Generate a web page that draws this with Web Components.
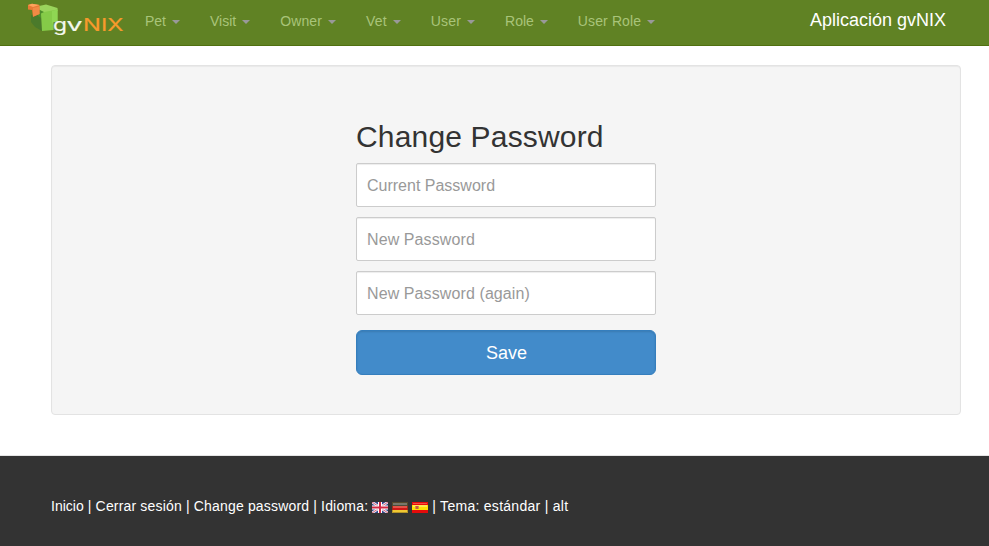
<!DOCTYPE html>
<html lang="es">
<head>
<meta charset="utf-8">
<title>Change Password</title>
<style>
html, body { margin: 0; height: 100%; }
body { font: 14px/20px "Liberation Sans", Arial, sans-serif; color: #333; background: #fff; overflow: hidden; }
</style>
</head>
<body>
<gv-page></gv-page>
<script>
const define = (name, html, setup) => customElements.define(name, class extends HTMLElement {
  constructor() {
    super();
    this.attachShadow({ mode: 'open' }).innerHTML = html;
  }
  connectedCallback() { if (setup) setup(this, this.shadowRoot); }
});

define('gv-logo', `
<style>:host{display:block;width:100px;height:36px} svg{display:block}</style>
<svg width="100" height="36" viewBox="26 0 100 36">
  <path d="M31 15L40 14L42 16V31L35 27L31 22Z" fill="#4b7a2b"/>
  <path d="M39 6L46 4.5L57.5 8L57.5 11L44 13.5L39 11Z" fill="#9ad45c"/>
  <path d="M38 9L44 12V17L41 18L38 16Z" fill="#4d8f2c"/>
  <path d="M41 13.5L44 12L57.5 9.5V22H53.5V30L42 31Z" fill="#85cb48"/>
  <path d="M52 11L57.5 9.5V22H53.5L52 24Z" fill="#8fd653"/>
  <path d="M28 5L32 3.8L39.5 5V14L33 17L32 10L28 9.5Z" fill="#e87b35"/>
  <path d="M28 5L32 3.8L39.5 5L33 7Z" fill="#ffa35c"/>
  <path d="M33 8L39.5 6.5V14L33 16.5Z" fill="#f28a45"/>
  <g font-family="Inter, sans-serif" stroke-width=".15">
    <text x="53" y="30.7" font-size="17" textLength="14" lengthAdjust="spacingAndGlyphs" fill="#f4f7ee" stroke="#f4f7ee">g</text>
    <text x="66.5" y="30.7" font-size="17" textLength="16" lengthAdjust="spacingAndGlyphs" fill="#f4f7ee" stroke="#f4f7ee">v</text>
    <text x="83" y="31" font-size="17.6" textLength="40.5" lengthAdjust="spacingAndGlyphs" fill="#f79a2c" stroke="#f79a2c">NIX</text>
  </g>
</svg>`);

define('gv-menu', `
<style>
:host{display:flex;align-items:center;padding:11px 15px 13px;color:#a9c47a;line-height:20px;white-space:nowrap}
i{margin-left:6px;margin-top:2px;border:4px solid transparent;border-top-color:#999;border-bottom:0}
</style><slot></slot><i></i>`);

define('gv-navbar', `
<style>
:host{display:flex;box-sizing:border-box;height:46px;padding:0 43px 0 26px;background:#608224;border-bottom:1px solid #507010;align-items:flex-start}
gv-logo{margin-right:4px}
nav{display:flex;flex:1}
.w{letter-spacing:.12px}
.x{letter-spacing:.2px}
.brand{font-size:18px;line-height:20px;padding-top:10px;color:#fff}
</style>
<gv-logo></gv-logo>
<nav><gv-menu>Pet</gv-menu><gv-menu>Visit</gv-menu><gv-menu class="w">Owner</gv-menu><gv-menu class="w">Vet</gv-menu><gv-menu class="x">User</gv-menu><gv-menu>Role</gv-menu><gv-menu class="w">User Role</gv-menu></nav>
<div class="brand"><slot></slot></div>`);

define('gv-field', `
<style>
:host{display:block}
input{display:block;box-sizing:border-box;width:100%;height:44px;margin:0;padding:11px 10px 9px;border:1px solid #ccc;border-radius:2px;background:#fff;font:16px/22px "Liberation Sans",Arial,sans-serif;letter-spacing:inherit;box-shadow:inset 0 1px 1px rgba(0,0,0,.075)}
input::placeholder{color:#999;opacity:1}
</style><input type="text">`,
(host, root) => { root.querySelector('input').placeholder = host.getAttribute('label'); });

define('gv-button', `
<style>
:host{display:block}
button{display:block;box-sizing:border-box;width:100%;height:45px;margin:0;padding:0 0 0 1px;border:1px solid #357ebd;border-radius:6px;background:#428bca;color:#fff;font:18px/24px "Liberation Sans",Arial,sans-serif;box-shadow:inset 0 1px 2px rgba(0,0,0,.12)}
</style><button type="button"><slot></slot></button>`);

define('gv-password-form', `
<style>
:host{display:flex;flex-direction:column;gap:10px;width:300px}
h2{font-size:30px;line-height:33px;font-weight:500;letter-spacing:.17px;margin:0;color:#333}
.new{letter-spacing:.1px}
gv-button{margin-top:5px}
</style>
<h2>Change Password</h2>
<gv-field label="Current Password"></gv-field>
<gv-field class="new" label="New Password"></gv-field>
<gv-field class="new" label="New Password (again)"></gv-field>
<gv-button>Save</gv-button>`);

define('gv-panel', `
<style>
:host{display:flex;justify-content:center;box-sizing:border-box;height:350px;margin:19px 28px 0 51px;padding-top:54px;border:1px solid #e3e3e3;border-radius:4px;background:#f5f5f5;box-shadow:inset 0 1px 1px rgba(0,0,0,.05)}
</style><slot></slot>`);

const flags = {
  en: `<rect width="16" height="11" fill="#36498c"/><path d="M0 0L16 11M16 0L0 11" stroke="#eceaf4" stroke-width="2.6"/><path d="M0 0L16 11M16 0L0 11" stroke="#d55269" stroke-width=".9"/><path d="M8 0V11M0 5.5H16" stroke="#fff" stroke-width="4"/><path d="M8 0V11M0 5.5H16" stroke="#d32743" stroke-width="2"/>`,
  de: `<rect width="16" height="4" fill="#4b4b38"/><rect y="1" x="1" width="14" height="2" fill="#77776a"/><rect y="4" width="16" height="4" fill="#cf1716"/><rect x="1" y="4" width="14" height="2" fill="#e35347"/><rect y="8" width="16" height="3" fill="#f0c832"/><path d="M.5 .5H15.5V10.5H.5Z" fill="none" stroke="#5e4818" stroke-opacity=".4"/>`,
  es: `<rect width="16" height="11" fill="#e50b0b"/><rect x="1" y="1" width="14" height="1" fill="#f34d40"/><rect y="3" width="16" height="5" fill="#ffe000"/><rect x="1" y="3" width="14" height="2" fill="#ffe951"/><path d="M3 4h1v3h-1zM6 4h1v3h-1z" fill="#c8964b"/><path d="M4 4h2v3h-2z" fill="#cf563c"/>`
};
define('gv-flag', `
<style>:host{display:block;width:16px;height:11px;white-space:normal}svg{display:block}</style><svg width="16" height="11" viewBox="0 0 16 11"></svg>`,
(host, root) => { root.querySelector('svg').innerHTML = flags[host.getAttribute('lang')]; });

define('gv-footer', `
<style>
:host{display:flex;align-items:flex-start;box-sizing:border-box;margin-top:40px;flex:1;border-top:1px solid #e5e5e5;background:#333;color:#fff;padding:40px 51px 0;line-height:20px;white-space:pre}
</style><slot></slot>`);

define('gv-page', `
<style>
:host{display:flex;flex-direction:column;height:100vh}
.a{letter-spacing:.17px}
.b{letter-spacing:.28px}
.flags{display:flex;gap:4px;margin:6px 4px 0 0}
</style>
<gv-navbar>Aplicación gvNIX</gv-navbar>
<gv-panel><gv-password-form></gv-password-form></gv-panel>
<gv-footer><span>Inicio</span><span class="a"> | Cerrar sesión | Change password | Idioma: </span><span class="flags"><gv-flag lang="en"></gv-flag><gv-flag lang="de"></gv-flag><gv-flag lang="es"></gv-flag></span><span class="b">| Tema: estándar | alt</span></gv-footer>`);
</script>
</body>
</html>
